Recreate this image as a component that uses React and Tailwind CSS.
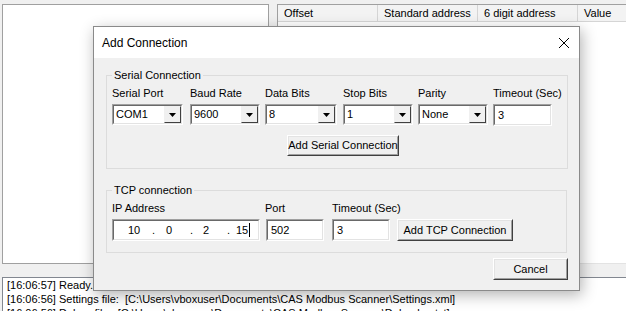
import React from "react";

const font = { fontFamily: '"Liberation Sans", Arial, sans-serif' };

function Sunken({ className = "", children }) {
  return (
    <div className={`border border-t-[#a0a0a0] border-l-[#a0a0a0] border-r-white border-b-white ${className}`}>
      <div className="h-full border border-t-[#696969] border-l-[#696969] border-r-[#e3e3e3] border-b-[#e3e3e3] bg-white flex items-center">
        {children}
      </div>
    </div>
  );
}

function Combo({ value, className = "" }) {
  return (
    <Sunken className={`h-[21px] ${className}`}>
      <span className="flex-1 pl-[2px] leading-none">{value}</span>
      <div className="h-full w-[17px] border border-t-[#f0f0f0] border-l-[#f0f0f0] border-r-[#404040] border-b-[#404040] bg-[#f0f0f0] flex items-center justify-center">
        <svg width="7" height="4" viewBox="0 0 7 4">
          <path d="M0 0h7L3.5 4z" fill="#000" />
        </svg>
      </div>
    </Sunken>
  );
}

function Button({ children, className = "" }) {
  return (
    <div className={`border border-t-white border-l-white border-r-[#404040] border-b-[#404040] ${className}`}>
      <div className="h-full border border-t-[#e3e3e3] border-l-[#e3e3e3] border-r-[#a0a0a0] border-b-[#a0a0a0] bg-[#f0f0f0] flex items-center justify-center whitespace-nowrap">
        {children}
      </div>
    </div>
  );
}

function Group({ title, className = "", children }) {
  return (
    <fieldset className={`border border-[#dcdcdc] mx-[12px] px-[5px] ${className}`}>
      <legend className="px-[2px] leading-[14px]">{title}</legend>
      {children}
    </fieldset>
  );
}

export default function App() {
  return (
    <div className="relative w-[626px] h-[311px] overflow-hidden bg-[#f0f0f0] text-[11px] text-black" style={font}>
      {/* main window behind */}
      <div className="flex flex-col h-full pt-[4px]">
        <div className="flex h-[273px] shrink-0">
          <div className="ml-[2px] w-[267px] h-[260px] bg-white border border-[#a0a0a0]" />
          <div className="ml-[8px] flex-1 flex flex-col border-l border-t border-[#a0a0a0] bg-white">
            <div className="flex h-[17px] bg-[#f3f3f3] border-b border-[#d5d5d5] leading-[16px] whitespace-nowrap">
              <div className="w-[100px] pl-[6px] border-r border-[#d5d5d5]">Offset</div>
              <div className="w-[100px] pl-[6px] border-r border-[#d5d5d5]">Standard address</div>
              <div className="w-[100px] pl-[6px] border-r border-[#d5d5d5]">6 digit address</div>
              <div className="flex-1 pl-[6px]">Value</div>
            </div>
            <div className="flex-1 bg-white" />
            <div className="h-[14px] bg-[#f0f0f0] border-t border-[#e3e3e3]" />
          </div>
        </div>
        <div className="ml-[2px] flex-1 min-h-0 overflow-hidden bg-white border-l border-t border-[#828790] pl-[4px] leading-[14px] whitespace-nowrap">
          <div>[16:06:57] Ready.</div>
          <div>[16:06:56] Settings file:&nbsp; [C:\Users\vboxuser\Documents\CAS Modbus Scanner\Settings.xml]</div>
          <div>[16:06:56] Debug file:&nbsp; [C:\Users\vboxuser\Documents\CAS Modbus Scanner\Debuglog.txt]</div>
        </div>
      </div>

      {/* dialog window */}
      <div className="absolute left-[93px] top-[26px] w-[487px] h-[265px] bg-[#f0f0f0] border border-[#8a8a8a] shadow-[2px_4px_14px_rgba(0,0,0,0.3)] flex flex-col">
        <div className="h-[31px] bg-white flex items-center justify-between pl-[8px] pr-[9px] shrink-0">
          <span className="text-[12px]">Add Connection</span>
          <svg width="12" height="12" viewBox="0 0 12 12">
            <path d="M1 1l10 10M11 1L1 11" stroke="#000" strokeWidth="1" />
          </svg>
        </div>

        <Group title="Serial Connection" className="mt-[10px] pb-[12px]">
          <div className="flex mt-[4px] leading-[14px] whitespace-nowrap">
            <span className="w-[78px]">Serial Port</span>
            <span className="w-[75px]">Baud Rate</span>
            <span className="w-[78px]">Data Bits</span>
            <span className="w-[75px]">Stop Bits</span>
            <span className="w-[75px]">Parity</span>
            <span>Timeout (Sec)</span>
          </div>
          <div className="flex items-start mt-[4px]">
            <Combo value="COM1" className="w-[71px]" />
            <Combo value="9600" className="w-[70px] ml-[7px]" />
            <Combo value="8" className="w-[72px] ml-[5px]" />
            <Combo value="1" className="w-[70px] ml-[6px]" />
            <Combo value="None" className="w-[70px] ml-[5px]" />
            <Sunken className="w-[59px] h-[22px] ml-[5px]">
              <span className="pl-[3px]">3</span>
            </Sunken>
          </div>
          <Button className="w-[112px] h-[21px] mt-[9px] ml-[175px]">Add Serial Connection</Button>
        </Group>

        <Group title="TCP connection" className="mt-[14px] pb-[11px]">
          <div className="flex mt-[4px] leading-[14px] whitespace-nowrap">
            <span className="w-[153px]">IP Address</span>
            <span className="w-[67px]">Port</span>
            <span>Timeout (Sec)</span>
          </div>
          <div className="flex items-start mt-[4px]">
            <Sunken className="w-[148px] h-[22px]">
              <div className="flex items-center pl-[14px] w-full">
                <span className="w-[24px]">10</span>
                <span className="w-[14px]">.</span>
                <span className="w-[24px]">0</span>
                <span className="w-[13px]">.</span>
                <span className="w-[24px]">2</span>
                <span className="w-[9px]">.</span>
                <span>15</span>
                <span className="w-px h-[14px] bg-black ml-[1px]" />
              </div>
            </Sunken>
            <Sunken className="w-[58px] h-[22px] ml-[6px]">
              <span className="pl-[3px]">502</span>
            </Sunken>
            <Sunken className="w-[58px] h-[22px] ml-[8px]">
              <span className="pl-[3px]">3</span>
            </Sunken>
            <Button className="w-[116px] h-[22px] ml-[7px]">Add TCP Connection</Button>
          </div>
        </Group>

        <div className="flex justify-end mr-[11px] mt-[5px]">
          <Button className="w-[75px] h-[22px]">Cancel</Button>
        </div>
      </div>
    </div>
  );
}
